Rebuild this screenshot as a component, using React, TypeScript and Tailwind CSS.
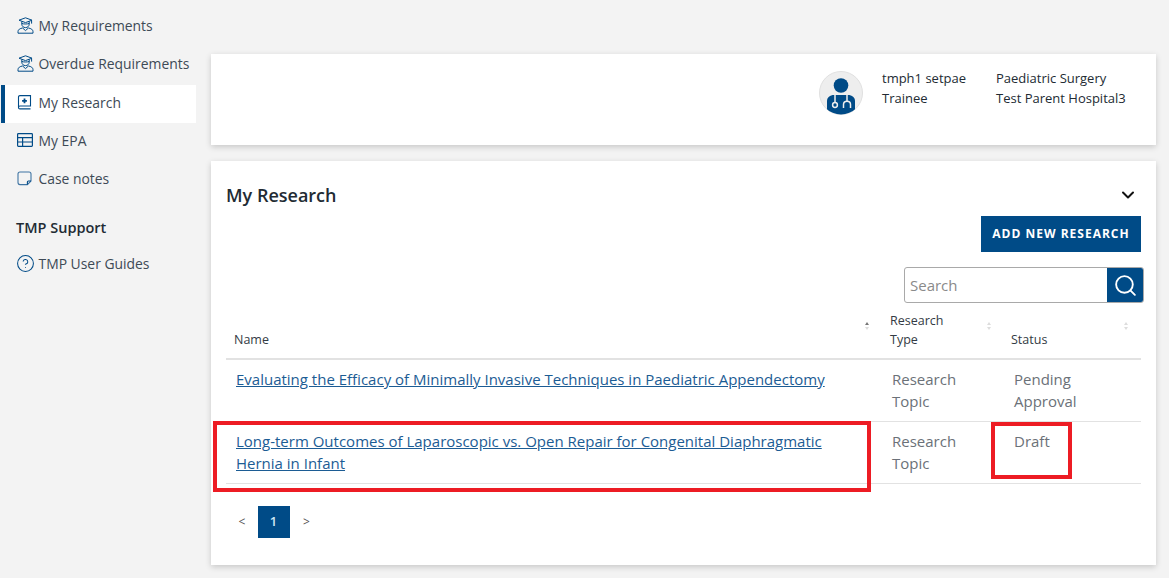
import React from "react";
import { ChevronDown, CircleHelp, Search } from "lucide-react";

const navy = "#004b87";

function GradIcon() {
  return (
    <svg width="17" height="17" viewBox="0 0 17 17" fill="none" stroke="#004b87" strokeWidth="1" className="shrink-0">
      <path d="M8.5 0.8 L15 3.2 L8.5 5.6 L2 3.2 Z" />
      <path d="M4.8 4.4 V7 C4.8 9.2 6.4 10.6 8.5 10.6 C10.6 10.6 12.2 9.2 12.2 7 V4.4" />
      <path d="M4.8 6.4 C6.5 7.2 10.5 7.2 12.2 6.4" />
      <path d="M1 16.2 V14.6 C1 12.6 3 11.4 5.6 11 L8.5 13.6 L11.4 11 C14 11.4 16 12.6 16 14.6 V16.2 Z" />
      <path d="M14.6 3.4 V6.6" />
    </svg>
  );
}

function BookIcon() {
  return (
    <svg width="15" height="15" viewBox="0 0 15 15" fill="none" stroke="#004b87" strokeWidth="1.1" className="shrink-0">
      <path d="M1.5 12.4 V2 C1.5 1.2 2.1 0.6 2.9 0.6 H13.5 V11 H2.9 C2.1 11 1.5 11.6 1.5 12.4 C1.5 13.2 2.1 13.9 2.9 13.9 H13.5" />
      <path d="M7.5 3.4 V8.2 M5.1 5.8 H9.9" strokeWidth="1.8" />
    </svg>
  );
}

function TableIcon() {
  return (
    <svg width="16" height="14" viewBox="0 0 16 14" fill="none" stroke="#004b87" strokeWidth="1.2" className="shrink-0">
      <rect x="0.6" y="0.6" width="14.8" height="12.8" rx="0.8" />
      <path d="M0.6 4.6 H15.4 M0.6 9 H15.4 M5.6 4.6 V13.4" />
    </svg>
  );
}

function NoteIcon() {
  return (
    <svg width="15" height="15" viewBox="0 0 15 15" fill="none" stroke="#3f74a3" strokeWidth="1.1" className="shrink-0">
      <path d="M10.4 13.6 H3 C1.8 13.6 1 12.8 1 11.6 V3 C1 1.8 1.8 1 3 1 H12 C13.2 1 14 1.8 14 3 V10 Z" />
      <path d="M10.4 13.6 V11 C10.4 10.4 10.8 10 11.4 10 H14" stroke="#004b87" />
    </svg>
  );
}

function DoctorAvatar() {
  return (
    <svg width="44" height="44" viewBox="0 0 44 44" className="shrink-0">
      <defs>
        <clipPath id="avatar-clip">
          <circle cx="22" cy="22" r="21.5" />
        </clipPath>
      </defs>
      <circle cx="22" cy="22" r="21.5" fill="#eeeeee" stroke="#e0e0e0" />
      <g clipPath="url(#avatar-clip)">
        <circle cx="22" cy="14.5" r="7.3" fill="#004b87" />
        <path d="M8 44 V30 C8 26.4 11 24 15 24 H29 C33 24 36 26.4 36 30 V44 Z" fill="#004b87" />
        <path d="M16 24 V31.5 M28 24 V30" stroke="#eeeeee" strokeWidth="1.5" fill="none" />
        <circle cx="16" cy="34" r="2.4" fill="none" stroke="#eeeeee" strokeWidth="1.5" />
        <path d="M24.5 37 V33.5 C24.5 29 31.5 29 31.5 33.5 V37" fill="none" stroke="#eeeeee" strokeWidth="1.5" />
      </g>
    </svg>
  );
}

function SortArrows({ active }: { active?: boolean }) {
  return (
    <span className="flex flex-col items-center gap-[2px]">
      <span className={`h-0 w-0 border-x-[2.5px] border-b-[3px] border-x-transparent ${active ? "border-b-[#777777]" : "border-b-[#dddddd]"}`} />
      <span className="h-0 w-0 border-x-[2.5px] border-t-[3px] border-x-transparent border-t-[#dddddd]" />
    </span>
  );
}

function NavRow({ icon, label, active }: { icon: React.ReactNode; label: string; active?: boolean }) {
  return (
    <div className={`flex h-[38px] items-center pb-[2px] text-[13.9px] text-[#3d4a56] ${active ? "border-l-4 border-[#004b87] bg-white pl-[12px]" : "pl-4"}`}>
      <span className="-mt-[2px] flex w-[21.5px]">{icon}</span>
      <span>{label}</span>
    </div>
  );
}

export default function App() {
  return (
    <div
      className="relative flex h-[578px] w-[1169px] overflow-hidden bg-[#f3f3f3] text-[#222b33]"
      style={{ fontFamily: '"Open Sans", sans-serif' }}
    >
      <aside className="ml-px w-[195px] shrink-0 pt-[8px]">
        <NavRow icon={<GradIcon />} label="My Requirements" />
        <NavRow icon={<GradIcon />} label="Overdue Requirements" />
        <div className="h-px" />
        <NavRow icon={<BookIcon />} label="My Research" active />
        <NavRow icon={<TableIcon />} label="My EPA" />
        <NavRow icon={<NoteIcon />} label="Case notes" />
        <div className="pl-[15px] pt-[19px] text-[14.5px] font-semibold leading-[20px] text-[#222b33]">TMP Support</div>
        <div className="mt-[8px]">
          <NavRow icon={<CircleHelp size={19} color={navy} strokeWidth={1.3} className="-ml-[1px]" />} label="TMP User Guides" />
        </div>
      </aside>

      <main className="ml-[15px] w-[945px] shrink-0 pt-[54px]">
        <section className="flex h-[91px] items-start justify-end bg-white pr-[30px] pt-[17px] shadow-[0_2px_6px_rgba(0,0,0,0.18)]">
          <DoctorAvatar />
          <div className="-mt-[3px] ml-[19px] w-[114px] text-[13px] leading-[20px]">
            <div>tmph1 setpae</div>
            <div>Trainee</div>
          </div>
          <div className="-mt-[3px] w-[130px] text-[13px] leading-[20px]">
            <div>Paediatric Surgery</div>
            <div>Test Parent Hospital3</div>
          </div>
        </section>

        <section className="mt-[16px] h-[404px] bg-white px-[15px] pt-[21px] shadow-[0_2px_6px_rgba(0,0,0,0.18)]">
          <div className="flex h-[26px] items-center justify-between">
            <h2 className="text-[18px] font-semibold text-[#222b33]">My Research</h2>
            <ChevronDown size={20} color="#111111" strokeWidth={2.4} className="mr-[3px]" />
          </div>
          <div className="mt-[8px] flex justify-end">
            <button className="h-9 w-40 bg-[#004b87] text-[12px] font-bold tracking-[1px] text-white">ADD NEW RESEARCH</button>
          </div>
          <div className="mt-[15px] flex justify-end">
            <div className="-mr-[3px] flex h-9 w-[240px] overflow-hidden rounded-[3px] border border-[#a9a9a9]">
              <div className="flex flex-1 items-center pl-[5px] text-[15px] text-[#8a8a8a]">Search</div>
              <div className="flex w-9 items-center justify-center bg-[#004b87]">
                <Search size={25} color="#ffffff" strokeWidth={1.8} />
              </div>
            </div>
          </div>

          <table className="mt-[8px] w-[915px] table-fixed border-collapse">
            <thead>
              <tr className="border-b-2 border-[#e2e2e2] text-left align-bottom text-[12.5px] leading-[19px] text-[#333b44]">
                <th className="relative w-[656px] px-2 pb-[9px] font-normal">
                  Name
                  <span className="absolute right-[13px] top-[11px]"><SortArrows active /></span>
                </th>
                <th className="relative w-[121px] px-2 pb-[9px] font-normal">
                  Research<br />Type
                  <span className="absolute right-[12px] top-[11px]"><SortArrows /></span>
                </th>
                <th className="relative px-2 pb-[9px] font-normal">
                  Status
                  <span className="absolute right-[13px] top-[11px]"><SortArrows /></span>
                </th>
              </tr>
            </thead>
            <tbody className="text-[15px] leading-[22px] text-[#6b7178]">
              <tr className="h-[62px] border-b border-[#e2e2e2] align-top">
                <td className="px-[10px] pt-[8px]">
                  <a className="text-[#1c5c94] underline">Evaluating the Efficacy of Minimally Invasive Techniques in Paediatric Appendectomy</a>
                </td>
                <td className="px-[10px] pt-[8px]">Research Topic</td>
                <td className="pl-[11px] pr-[10px] pt-[8px]">Pending Approval</td>
              </tr>
              <tr className="h-[62px] border-b border-[#e2e2e2] align-top">
                <td className="px-[10px] pt-[8px]">
                  <a className="text-[#1c5c94] underline">Long-term Outcomes of Laparoscopic vs. Open Repair for Congenital Diaphragmatic Hernia in Infant</a>
                </td>
                <td className="px-[10px] pt-[8px]">Research Topic</td>
                <td className="pl-[11px] pr-[10px] pt-[8px]">Draft</td>
              </tr>
            </tbody>
          </table>

          <div className="mt-[22px] flex items-center pl-[6px] text-[12px] text-[#555555]">
            <span className="mr-[6px] w-[20px] text-center">&lt;</span>
            <span className="flex h-8 w-8 items-center justify-center bg-[#004b87] pr-px text-[13px] font-semibold text-[#cfe6f5]">1</span>
            <span className="w-[33px] text-center">&gt;</span>
          </div>
        </section>
      </main>

      <div className="absolute left-[213px] top-[421px] h-[71px] w-[658px] border-4 border-[#ed1c24]" />
      <div className="absolute left-[991px] top-[422px] h-[57px] w-[81px] border-4 border-[#ed1c24]" />
    </div>
  );
}
